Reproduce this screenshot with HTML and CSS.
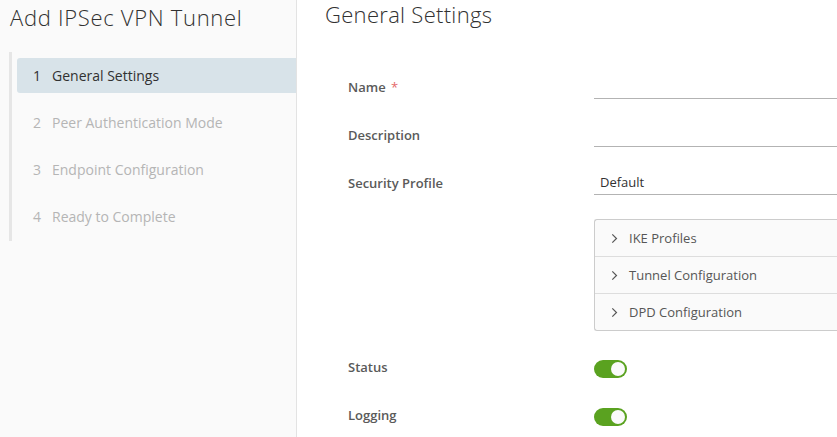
FILE: index.html
```html
<!DOCTYPE html>
<html>
<head>
<meta charset="utf-8">
<link rel="stylesheet" href="styles.css">
</head>
<body>
<div class="wizard">
  <aside class="sidebar">
    <h1 class="wiz-title">Add IPSec VPN Tunnel</h1>
    <ol class="steps">
      <li class="step active"><span class="num">1</span><span>General Settings</span></li>
      <li class="step"><span class="num">2</span><span>Peer Authentication Mode</span></li>
      <li class="step"><span class="num">3</span><span>Endpoint Configuration</span></li>
      <li class="step"><span class="num">4</span><span>Ready to Complete</span></li>
    </ol>
  </aside>
  <main class="content">
    <h2 class="page-title">General Settings</h2>
    <div class="form">
      <div class="row">
        <label class="lbl">Name <span class="req">*</span></label>
        <div class="field"><div class="input"></div></div>
      </div>
      <div class="row">
        <label class="lbl">Description</label>
        <div class="field"><div class="input"></div></div>
      </div>
      <div class="row">
        <label class="lbl">Security Profile</label>
        <div class="field"><div class="input select">Default</div></div>
      </div>
      <div class="row panel-row">
        <div class="lbl"></div>
        <div class="field">
          <div class="accordion">
            <div class="acc-item"><svg class="chev" viewBox="0 0 10 10"><path d="M3 1.2 L6.8 5 L3 8.8" fill="none" stroke="#565656" stroke-width="1.1"/></svg>IKE Profiles</div>
            <div class="acc-item"><svg class="chev" viewBox="0 0 10 10"><path d="M3 1.2 L6.8 5 L3 8.8" fill="none" stroke="#565656" stroke-width="1.1"/></svg>Tunnel Configuration</div>
            <div class="acc-item"><svg class="chev" viewBox="0 0 10 10"><path d="M3 1.2 L6.8 5 L3 8.8" fill="none" stroke="#565656" stroke-width="1.1"/></svg>DPD Configuration</div>
          </div>
        </div>
      </div>
      <div class="row toggle-row first-toggle">
        <label class="lbl">Status</label>
        <div class="field"><span class="toggle"><span class="knob"></span></span></div>
      </div>
      <div class="row toggle-row">
        <label class="lbl">Logging</label>
        <div class="field"><span class="toggle"><span class="knob"></span></span></div>
      </div>
    </div>
  </main>
</div>
</body>
</html>
```

FILE: styles.css
```css
html, body {
  margin: 0;
  padding: 0;
  height: 100%;
  overflow: hidden;
}
body {
  font-family: "Open Sans", "Liberation Sans", sans-serif;
  color: #565656;
  background: #ffffff;
}
.wizard {
  display: flex;
  height: 437px;
  width: 837px;
}
.sidebar {
  width: 296px;
  flex: 0 0 296px;
  background: #fafafa;
  border-right: 1px solid #e3e3e3;
  box-sizing: content-box;
}
.wiz-title {
  margin: 0;
  padding: 2px 0 0 10px;
  font-size: 22px;
  font-weight: 300;
  color: #313131;
  line-height: 30px;
  letter-spacing: 0.7px;
}
.steps {
  list-style: none;
  margin: 20px 0 0 9px;
  padding: 6px 0 7px 5px;
  border-left: 3px solid #e6e6e6;
  display: flex;
  flex-direction: column;
  gap: 12px;
}
.step {
  height: 35px;
  display: flex;
  align-items: center;
  font-size: 14px;
  color: #b5b5b5;
  padding-left: 16px;
  border-radius: 3px 0 0 3px;
}
.step .num {
  width: 19px;
}
.step.active {
  background: #d8e3e9;
  color: #313131;
}
.content {
  flex: 1;
  padding-left: 28px;
  min-width: 0;
}
.page-title {
  margin: 0;
  padding-top: 1px;
  font-size: 22px;
  font-weight: 300;
  color: #313131;
  line-height: 26px;
  letter-spacing: 0.3px;
}
.form {
  margin-top: 33px;
  padding-left: 23px;
  display: flex;
  flex-direction: column;
}
.row {
  display: flex;
  align-items: flex-end;
  height: 48px;
}
.row:first-child {
  height: 39px;
}
.lbl {
  width: 246px;
  flex: 0 0 246px;
  font-size: 13px;
  font-weight: 600;
  color: #5a5a5a;
  line-height: 24px;
}
.req {
  color: #e46a6a;
  font-weight: 400;
  margin-left: 2px;
}
.field {
  flex: 1;
  min-width: 0;
}
.input {
  height: 24px;
  border-bottom: 1px solid #b3b3b3;
  margin-right: -2px;
  font-size: 13px;
  line-height: 24px;
  color: #313131;
  padding-left: 6px;
}
.panel-row {
  height: auto;
  margin-top: 24px;
}
.accordion {
  border: 1px solid #cccccc;
  border-right: none;
  border-radius: 3px 0 0 3px;
  background: #fafafa;
}
.acc-item {
  height: 36px;
  display: flex;
  align-items: center;
  padding-left: 14px;
  font-size: 13px;
  color: #565656;
  border-top: 1px solid #dddddd;
}
.acc-item:first-child {
  border-top: none;
}
.chev {
  width: 11px;
  height: 11px;
  margin-right: 9px;
}
.toggle-row {
  height: 48px;
  align-items: center;
}
.first-toggle {
  margin-top: 12px;
}
.toggle {
  display: inline-flex;
  align-items: center;
  justify-content: flex-end;
  width: 33px;
  height: 18px;
  border-radius: 9px;
  background: #5aa220;
  box-sizing: border-box;
  padding-right: 2px;
  vertical-align: middle;
}
.knob {
  width: 14px;
  height: 14px;
  border-radius: 50%;
  background: #fafafa;
}
```
